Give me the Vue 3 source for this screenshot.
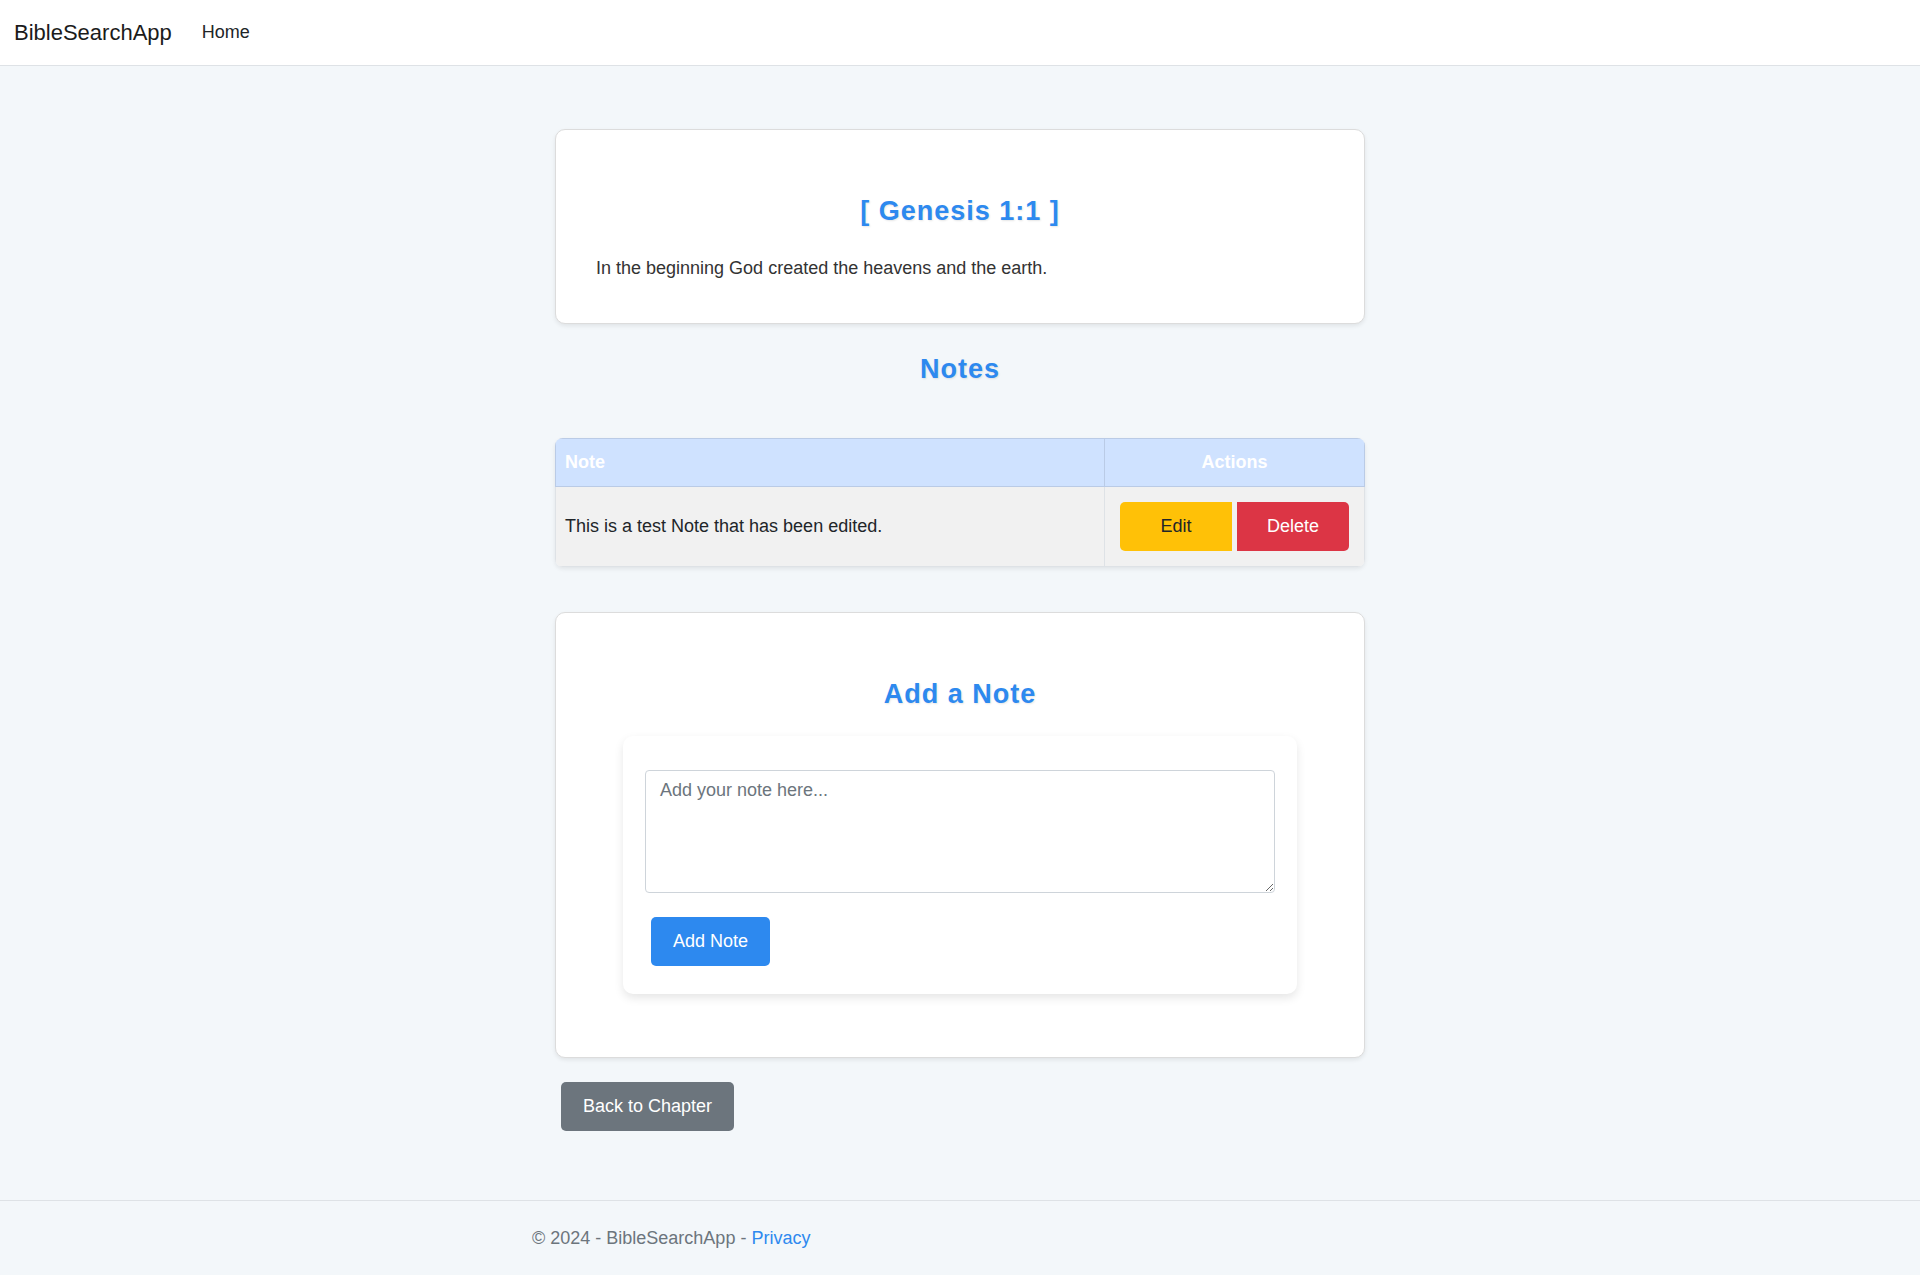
<script setup>
import { ref } from 'vue'

const notes = ref([{ id: 1, text: 'This is a test Note that has been edited.' }])
const draft = ref('')

function addNote() {
  const text = draft.value.trim()
  if (!text) return
  notes.value.push({ id: Date.now(), text })
  draft.value = ''
}

function removeNote(id) {
  notes.value = notes.value.filter((note) => note.id !== id)
}
</script>

<template>
  <div class="page">
    <header>
      <nav class="navbar">
        <a class="brand" href="#">BibleSearchApp</a>
        <a class="nav-link" href="#">Home</a>
      </nav>
    </header>

    <main class="content">
      <section class="card">
        <h2>[ Genesis 1:1 ]</h2>
        <p class="verse">In the beginning God created the heavens and the earth.</p>
      </section>

      <h2 class="notes-title">Notes</h2>

      <div class="table-wrap">
        <table>
          <thead>
            <tr>
              <th scope="col">Note</th>
              <th scope="col" class="actions-head">Actions</th>
            </tr>
          </thead>
          <tbody>
            <tr v-for="note in notes" :key="note.id">
              <td>{{ note.text }}</td>
              <td class="actions-cell">
                <div class="actions">
                  <button type="button" class="btn edit">Edit</button>
                  <button type="button" class="btn delete" @click="removeNote(note.id)">Delete</button>
                </div>
              </td>
            </tr>
          </tbody>
        </table>
      </div>

      <section class="card add-card">
        <h2>Add a Note</h2>
        <form class="note-form" @submit.prevent="addNote">
          <textarea v-model="draft" aria-label="Note text" placeholder="Add your note here..."></textarea>
          <button type="submit" class="btn primary">Add Note</button>
        </form>
      </section>

      <a class="btn back" href="#">Back to Chapter</a>
    </main>

    <footer>
      <div class="footer-inner">© 2024 - BibleSearchApp - <a href="#">Privacy</a></div>
    </footer>
  </div>
</template>

<style>
body {
  margin: 0;
  background: #f3f7fa;
}
</style>

<style scoped>
* {
  box-sizing: border-box;
}

.page {
  display: flex;
  flex-direction: column;
  min-height: 100vh;
  font-family: "Liberation Sans", Arial, sans-serif;
  font-size: 18px;
  line-height: 27px;
  color: #212529;
}

a {
  text-decoration: none;
}

.navbar {
  display: flex;
  align-items: center;
  gap: 30px;
  height: 66px;
  padding: 0 14px;
  background: #fff;
  border-bottom: 1px solid #dee2e6;
}

.brand {
  font-size: 22px;
  color: #1b1b1b;
}

.nav-link {
  color: #212529;
}

.content {
  width: 100%;
  max-width: 856px;
  margin: 0 auto;
  padding: 63px 23px 68px;
}

.card {
  padding: 41px 40px;
  background: #fff;
  border: 1px solid #dcdcdc;
  border-radius: 10px;
  box-shadow: 0 2px 4px rgba(0, 0, 0, 0.08);
}

h2 {
  margin: 23px 0 27px;
  font-size: 27px;
  line-height: 34px;
  font-weight: 700;
  text-align: center;
  letter-spacing: 1px;
  color: #2d89ef;
  text-shadow: 1px 1px 2px rgba(0, 0, 0, 0.1);
}

.verse {
  margin: 0;
  color: #333;
}

.notes-title {
  margin: 28px 0 52px;
}

.table-wrap {
  margin-bottom: 45px;
  overflow: hidden;
  border-radius: 8px;
  box-shadow: 0 2px 4px rgba(0, 0, 0, 0.08);
}

table {
  width: 100%;
  border-collapse: collapse;
  background: #f1f1f1;
}

th,
td {
  padding: 9px;
  border: 1px solid #dee2e6;
  text-align: left;
}

th {
  height: 48px;
  background: #cfe2ff;
  border-color: #bacbe6;
  color: #fff;
}

.actions-head {
  width: 260px;
  text-align: center;
}

.actions-cell {
  padding: 15px;
}

.actions {
  display: flex;
  gap: 5px;
}

.btn {
  display: inline-block;
  padding: 11px 22px;
  border: 0;
  border-radius: 5px;
  font: inherit;
  color: #fff;
  cursor: pointer;
}

.actions .btn {
  flex: 1;
}

.edit {
  border-radius: 5px 0 0 5px;
  background: #ffc107;
  color: #212529;
}

.delete {
  border-radius: 0 5px 5px 0;
  background: #dc3545;
}

.add-card {
  margin-bottom: 24px;
  padding-bottom: 63px;
}

.add-card h2 {
  margin-bottom: 25px;
}

.note-form {
  margin: 0 27px;
  padding: 34px 22px 28px;
  border-radius: 10px;
  box-shadow: 0 4px 10px rgba(0, 0, 0, 0.1);
}

textarea {
  display: block;
  width: 100%;
  height: 123px;
  margin-bottom: 24px;
  padding: 6px 14px;
  border: 1px solid #ced4da;
  border-radius: 4px;
  background: #fff;
  font: inherit;
  color: #212529;
  resize: vertical;
}

textarea::placeholder {
  color: #6c757d;
}

.primary {
  display: block;
  margin-left: 6px;
  background: #2d89ef;
}

.back {
  margin-left: 6px;
  background: #6c757d;
}

footer {
  margin-top: auto;
  border-top: 1px solid #dee2e6;
  color: #6c757d;
}

.footer-inner {
  max-width: 856px;
  margin: 0 auto;
  padding: 24px 0 23px;
}

.footer-inner a {
  color: #2d89ef;
}
</style>
